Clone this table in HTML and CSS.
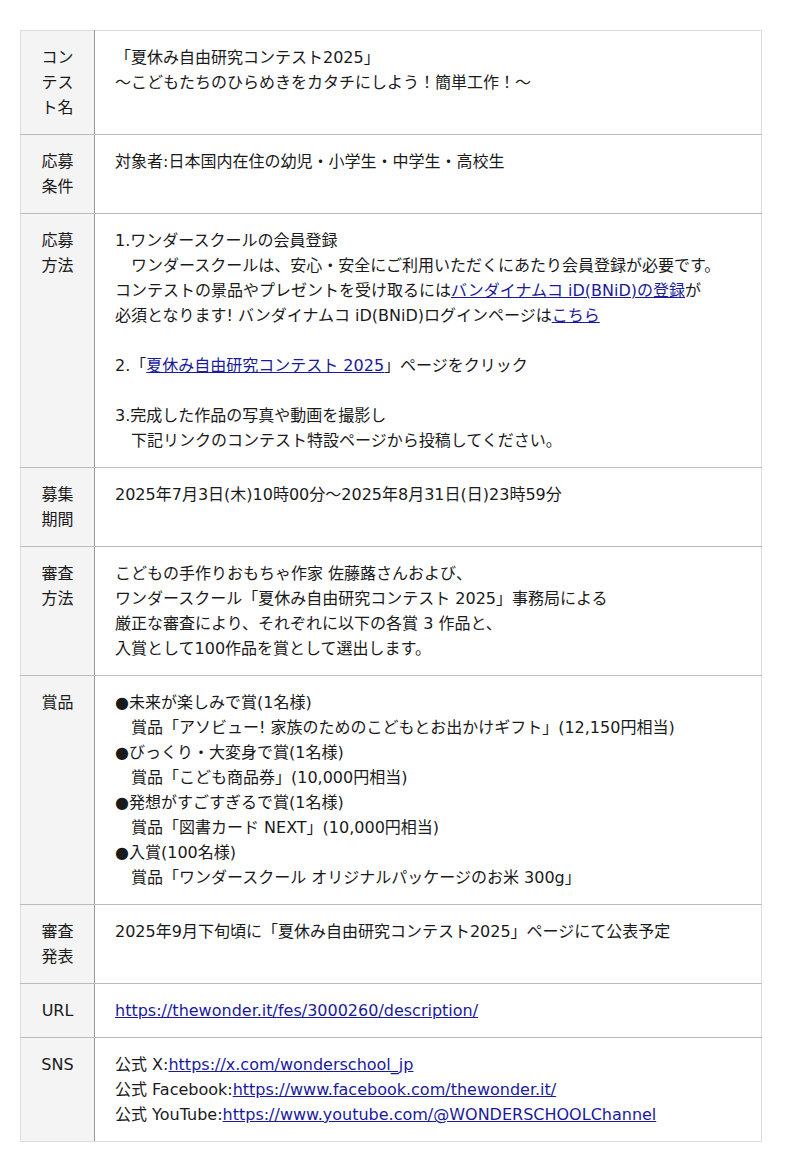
FILE: index.html
```html
<!DOCTYPE html>
<html lang="ja">
<head>
    <meta charset="UTF-8">
    <meta name="viewport" content="width=device-width, initial-scale=1.0">
    <title>夏休み自由研究コンテスト2025</title>
    <link rel="stylesheet" href="styles.css">
</head>
<body>
    <table class="contest-table">
        <colgroup>
            <col class="col-head">
            <col>
        </colgroup>
        <tr>
            <th>コンテスト名</th>
            <td>「夏休み自由研究コンテスト2025」<br>〜こどもたちのひらめきをカタチにしよう！簡単工作！〜</td>
        </tr>
        <tr>
            <th>応募条件</th>
            <td>対象者:日本国内在住の幼児・小学生・中学生・高校生</td>
        </tr>
        <tr>
            <th>応募方法</th>
            <td>1.ワンダースクールの会員登録<br>
                　ワンダースクールは、安心・安全にご利用いただくにあたり会員登録が必要です。<br>
                コンテストの景品やプレゼントを受け取るには<a href="#">バンダイナムコ iD(BNiD)の登録</a>が<br>
                必須となります! バンダイナムコ iD(BNiD)ログインページは<a href="#">こちら</a><br>
                <br>
                2.「<a href="#">夏休み自由研究コンテスト 2025</a>」ページをクリック<br>
                <br>
                3.完成した作品の写真や動画を撮影し<br>
                　下記リンクのコンテスト特設ページから投稿してください。</td>
        </tr>
        <tr>
            <th>募集期間</th>
            <td>2025年7月3日(木)10時00分〜2025年8月31日(日)23時59分</td>
        </tr>
        <tr>
            <th>審査方法</th>
            <td>こどもの手作りおもちゃ作家 佐藤蕗さんおよび、<br>
                ワンダースクール「夏休み自由研究コンテスト 2025」事務局による<br>
                厳正な審査により、それぞれに以下の各賞 3 作品と、<br>
                入賞として100作品を賞として選出します。</td>
        </tr>
        <tr>
            <th>賞品</th>
            <td>●未来が楽しみで賞(1名様)<br>
                　賞品「アソビュー! 家族のためのこどもとお出かけギフト」(12,150円相当)<br>
                ●びっくり・大変身で賞(1名様)<br>
                　賞品「こども商品券」(10,000円相当)<br>
                ●発想がすごすぎるで賞(1名様)<br>
                　賞品「図書カード NEXT」(10,000円相当)<br>
                ●入賞(100名様)<br>
                　賞品「ワンダースクール オリジナルパッケージのお米 300g」</td>
        </tr>
        <tr>
            <th>審査発表</th>
            <td>2025年9月下旬頃に「夏休み自由研究コンテスト2025」ページにて公表予定</td>
        </tr>
        <tr>
            <th>URL</th>
            <td><a href="#">https://thewonder.it/fes/3000260/description/</a></td>
        </tr>
        <tr>
            <th>SNS</th>
            <td>公式 X:<a href="#">https://x.com/wonderschool_jp</a><br>
                公式 Facebook:<a href="#">https://www.facebook.com/thewonder.it/</a><br>
                公式 YouTube:<a href="#">https://www.youtube.com/@WONDERSCHOOLChannel</a></td>
        </tr>
    </table>
</body>
</html>
```

FILE: styles.css
```css
body {
    font-family: 'DejaVu Sans', 'Noto Sans CJK JP', sans-serif;
    font-size: 16px;
    line-height: 25px;
    color: #1a1a1a;
    margin: 0;
    padding: 30px 20px;
    background: #fff;
}

.contest-table {
    width: 742px;
    border-collapse: collapse;
    table-layout: fixed;
    border: 1px solid #ddd;
}

.col-head {
    width: 74px;
}

.contest-table th,
.contest-table td {
    padding: 14px 20px;
    vertical-align: top;
    border-top: 1px solid #bbb;
    border-bottom: 1px solid #bbb;
}

.contest-table tr:first-child th,
.contest-table tr:first-child td {
    border-top: 1px solid #ddd;
}

.contest-table tr:last-child th,
.contest-table tr:last-child td {
    border-bottom: 1px solid #ddd;
}

.contest-table th {
    font-weight: normal;
    background: #f4f4f4;
    text-align: center;
    border-left: 1px solid #ddd;
    border-right: 1px solid #999;
}

.contest-table td {
    border-right: 1px solid #ddd;
}

.contest-table a {
    color: #1a1a9c;
    text-decoration: underline;
}
```
